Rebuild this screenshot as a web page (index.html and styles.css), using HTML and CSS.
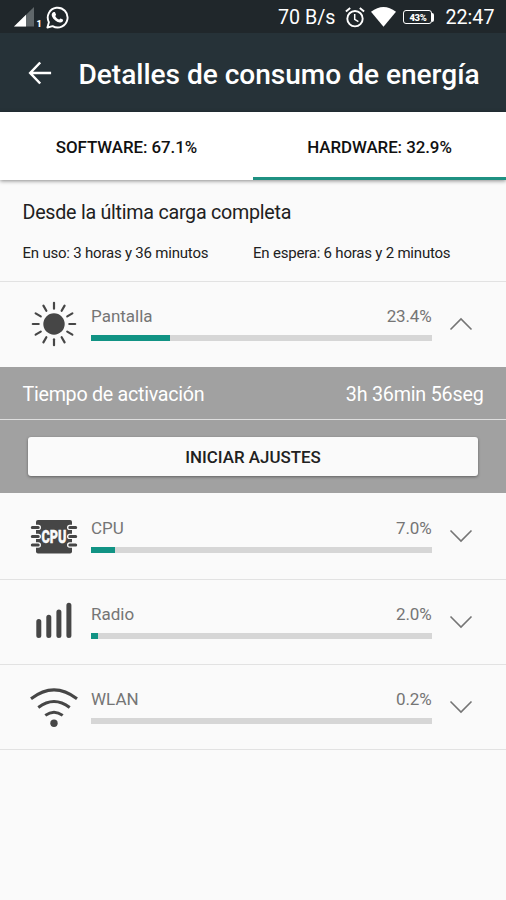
FILE: index.html
```
<!DOCTYPE html>
<html lang="es">
<head>
<meta charset="utf-8">
<title>Detalles de consumo de energía</title>
<link rel="stylesheet" href="styles.css">
</head>
<body>
<div class="statusbar">
  <svg class="sb-signal" width="20" height="20" viewBox="0 0 20 20"><path d="M20 0V19.500H0z" fill="#60676a"/><path d="M12 7.800V19.500H0z" fill="#fff"/></svg>
  <span class="sb-sim">1</span>
  <svg class="sb-wa" width="23" height="23" viewBox="0 0 23 23"><path d="M1.400 21.500L2.900 16.200A9.900 9.900 0 1 1 6.600 20.100z" fill="none" stroke="#fff" stroke-width="1.900" stroke-linejoin="round"/><path d="M7.700 6.100c.5-.3 1.100-.2 1.300.2l1 2.200c.2.500-.8 1.300-.7 1.700.8 1.600 2 2.700 3.700 3.400.5.100 1.200-1.300 1.700-1.100l2.100 1.100c.5.300.3 1.200-.1 1.800-.8 1-2.300 1.300-3.700.9-3.500-1-6.600-3.900-7.300-7.100-.2-1.200.8-2.600 2-3.100z" fill="#fff"/></svg>
  <span class="sb-rate">70 B/s</span>
  <svg class="sb-alarm" width="20" height="21" viewBox="0 0 20 21"><g fill="none" stroke="#fff"><circle cx="10" cy="11.700" r="7.700" stroke-width="1.900"/><path d="M.9 4.600L5.200 1M14.800 1l4.300 3.600" stroke-width="1.900"/><path d="M9.700 7v5.300l3.700 2.300" stroke-width="1.500"/></g></svg>
  <svg class="sb-wifi" width="25" height="20" viewBox="0 0 25 20"><path d="M0 4.800Q12.500-4.800 25 4.800L12.500 19.800z" fill="#fff"/></svg>
  <span class="battery"><span class="battery-level">43%</span></span>
  <span class="sb-time">22:47</span>
</div>
<header class="appbar">
  <svg class="back" width="24" height="24" viewBox="0 0 24 24"><path d="M12.200 1.500L2.200 12l10 10.500M2.200 12h20.900" fill="none" stroke="#fff" stroke-width="2.500"/></svg>
  <h1>Detalles de consumo de energía</h1>
</header>
<nav class="tabs">
  <div class="tab"><span>SOFTWARE: 67.1%</span></div>
  <div class="tab active"><span>HARDWARE: 32.9%</span></div>
</nav>
<section class="summary">
  <h2>Desde la última carga completa</h2>
  <div class="times"><span>En uso: 3 horas y 36 minutos</span><span>En espera: 6 horas y 2 minutos</span></div>
</section>
<main>
  <section class="row">
    <svg class="icon" width="50" height="50" viewBox="-25 -25 50 50"><circle r="10.700" fill="#464646"/><g stroke="#464646" stroke-width="2.200" stroke-linecap="round"><path id="ray" d="M0-15.300V-21.200"/><use href="#ray" transform="rotate(30)"/><use href="#ray" transform="rotate(60)"/><use href="#ray" transform="rotate(90)"/><use href="#ray" transform="rotate(120)"/><use href="#ray" transform="rotate(150)"/><use href="#ray" transform="rotate(180)"/><use href="#ray" transform="rotate(210)"/><use href="#ray" transform="rotate(240)"/><use href="#ray" transform="rotate(270)"/><use href="#ray" transform="rotate(300)"/><use href="#ray" transform="rotate(330)"/></g></svg>
    <div class="info"><div class="label"><span>Pantalla</span><span>23.4%</span></div><div class="bar"><div class="fill" style="width:23.1%"></div></div></div>
    <svg class="chev" width="24" height="14" viewBox="0 0 24 14"><path d="M1.500 12.500L12 2l10.500 10.500"/></svg>
  </section>
  <section class="detail">
    <div class="detail-time"><span>Tiempo de activación</span><span class="duration">3h 36min 56seg</span></div>
    <div class="detail-action"><button type="button">INICIAR AJUSTES</button></div>
  </section>
  <section class="row">
    <svg class="icon" width="50" height="50" viewBox="-25 -25 50 50"><rect x="-18" y="-16" width="36" height="33.500" rx="2" fill="#464646"/><path d="M-19-8.600h3.300M-19 .4h3.300M-19 9h3.300M15.700-8.600h3.300M15.700 .4h3.300M15.700 9h3.300" stroke="#fafafa" stroke-width="5.400" stroke-linecap="round"/><path d="M-21.700-8.600h5.900M-21.700 .4h5.900M-21.700 9h5.900M15.800-8.600h5.900M15.800 .4h5.900M15.800 9h5.900" stroke="#464646" stroke-width="3" stroke-linecap="round"/><text class="chip-text" x="0" y="7.300" text-anchor="middle" textLength="25" lengthAdjust="spacingAndGlyphs">CPU</text></svg>
    <div class="info"><div class="label"><span>CPU</span><span>7.0%</span></div><div class="bar"><div class="fill" style="width:7.0%"></div></div></div>
    <svg class="chev" width="24" height="14" viewBox="0 0 24 14"><path d="M1.500 1.500L12 12l10.500-10.500"/></svg>
  </section>
  <section class="row">
    <svg class="icon" width="50" height="50" viewBox="-25 -25 50 50"><path d="M-15.200-.4V13.600M-5.200-4.700V13.600M4.900-10V13.600M14.900-16.800V13.600" stroke="#464646" stroke-width="5" stroke-linecap="round"/></svg>
    <div class="info"><div class="label"><span>Radio</span><span>2.0%</span></div><div class="bar"><div class="fill" style="width:2.1%"></div></div></div>
    <svg class="chev" width="24" height="14" viewBox="0 0 24 14"><path d="M1.500 1.500L12 12l10.500-10.500"/></svg>
  </section>
  <section class="row last">
    <svg class="icon" width="50" height="50" viewBox="-25 -25 50 50"><g fill="none" stroke="#464646" stroke-width="3"><path d="M-23-8.200Q0-26 23-8.200"/><path d="M-15.700.5Q0-11.500 15.700.5"/><path d="M-8.700 8.400Q0 2 8.700 8.400"/></g><circle cy="16.200" r="3.700" fill="#464646"/></svg>
    <div class="info"><div class="label"><span>WLAN</span><span>0.2%</span></div><div class="bar"></div></div>
    <svg class="chev" width="24" height="14" viewBox="0 0 24 14"><path d="M1.500 1.500L12 12l10.500-10.500"/></svg>
  </section>
</main>
</body>
</html>
```
FILE: styles.css
```
* { box-sizing: border-box; }
body {
  margin: 0;
  width: 506px;
  height: 900px;
  overflow: hidden;
  background: #fafafa;
  color: #212121;
  font-family: Roboto, "Liberation Sans", sans-serif;
}
svg { display: block; flex: none; }
h1, h2 { margin: 0; }
span { white-space: nowrap; }

.statusbar {
  display: flex;
  align-items: center;
  height: 33px;
  padding: 1px 11.500px 0 14px;
  background: #20272b;
  color: #fff;
  font-size: 19.7px;
  line-height: 32px;
}
.sb-rate, .sb-time { padding-top: 2px; }
.sb-sim { margin: 13px 0 0 2.500px; width: 6.500px; font-size: 9px; font-weight: 900; line-height: 10px; }
.sb-wa { margin-left: 3px; }
.sb-rate { margin-left: auto; }
.sb-alarm { margin-left: 10px; }
.sb-wifi { margin-left: 6px; }
.battery {
  position: relative;
  width: 29px;
  height: 14px;
  margin: 0 13px 0 7px;
  border: 1.5px solid #fff;
  border-radius: 3px;
  text-align: center;
}
.battery::after {
  content: "";
  position: absolute;
  right: -3px;
  top: 1.500px;
  width: 2px;
  height: 9px;
  border-radius: 0 2px 2px 0;
  background: #fff;
}
.battery-level { display: block; font-size: 9.500px; font-weight: 900; line-height: 13px; letter-spacing: -.3px; }

.appbar {
  display: flex;
  align-items: center;
  height: 79px;
  padding-left: 27.500px;
  background: #263238;
  color: #fff;
}
.appbar h1 { margin: 5px 0 0 27px; font-size: 28.1px; font-weight: 500; line-height: 40px; letter-spacing: -.03px; white-space: nowrap; }

.tabs {
  position: relative;
  display: flex;
  height: 68px;
  background: #fff;
  box-shadow: 0 1px 4px rgba(0, 0, 0, .45);
}
.tab {
  flex: 1;
  padding-top: 3px;
  border-bottom: 3px solid transparent;
  color: #111;
  font-size: 16.9px;
  font-weight: 500;
  line-height: 64px;
  letter-spacing: -.06px;
  text-align: center;
}
.tab.active { border-color: #1f9182; }

.summary { height: 101px; padding: 20px 0 0 22.500px; }
.summary h2 { font-size: 19.7px; font-weight: 400; line-height: 25px; letter-spacing: -.26px; }
.times { display: grid; grid-template-columns: 230.500px 1fr; margin-top: 18px; font-size: 15px; line-height: 20px; letter-spacing: -.21px; }

.row {
  display: flex;
  height: 85.500px;
  padding-left: 28.500px;
  border-top: 1px solid #e2e2e2;
}
.detail + .row { border-top-color: transparent; height: 86px; }
.row.last { height: 86px; border-bottom: 1px solid #e2e2e2; }
.icon { margin-top: 17px; }
.info { width: 340.500px; margin: 23px 0 0 12.500px; }
.label { display: flex; justify-content: space-between; color: #757575; font-size: 17px; line-height: 22px; }
.label span:last-child { letter-spacing: -.15px; }
.bar { height: 6px; margin-top: 8px; background: #d6d6d6; }
.fill { height: 100%; background: #119384; }
.chev { margin: 35px 0 0 17.500px; }
.chev path { fill: none; stroke: #757575; stroke-width: 1.600; }
.chip-text { fill: #fafafa; stroke: #fafafa; stroke-width: .4px; font-size: 18.500px; font-weight: 900; }

.detail { height: 126px; background: #a1a1a1; }
.detail-time {
  display: flex;
  justify-content: space-between;
  height: 53px;
  padding: 2px 22.500px 0;
  border-bottom: 1px solid #dedede;
  color: #fff;
  font-size: 19.7px;
  line-height: 52px;
  letter-spacing: -.28px;
}
.duration { letter-spacing: -.2px; }
.detail-action { padding: 17px 28px 0; }
.detail-action button {
  display: block;
  width: 450px;
  height: 39px;
  padding: 1px 0 0;
  border: 0;
  border-radius: 3px;
  background: #fafafa;
  box-shadow: 0 1px 3px rgba(0, 0, 0, .4);
  color: #212121;
  font: 500 16.9px/38px Roboto, "Liberation Sans", sans-serif;
}
```
